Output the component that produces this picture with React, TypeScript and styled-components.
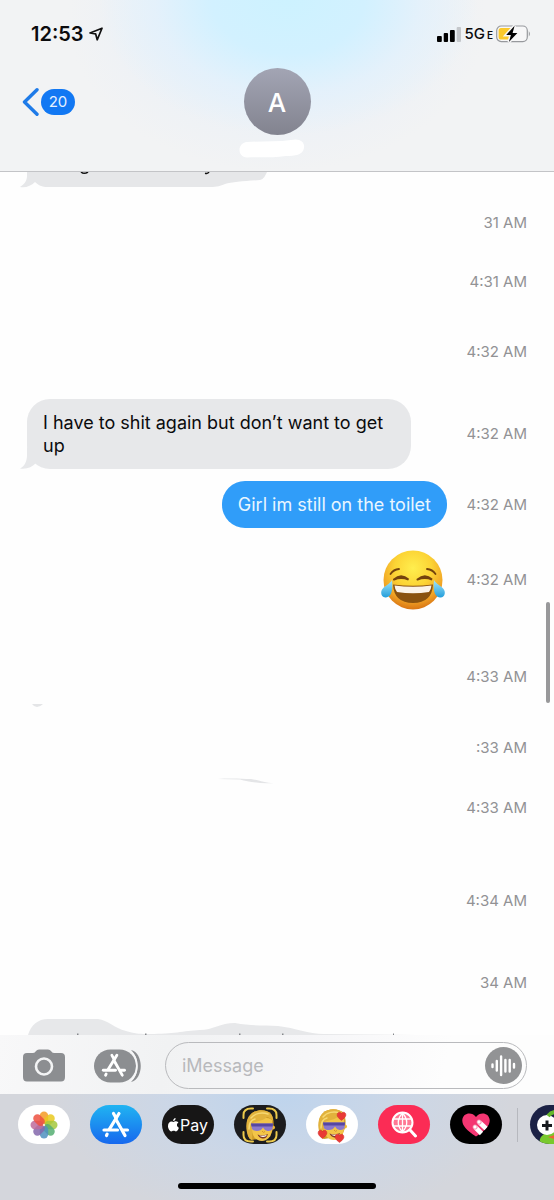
import React from "react";
import styled, { createGlobalStyle } from "styled-components";

const GlobalStyle = createGlobalStyle`
  * { box-sizing: border-box; }
  html, body { margin: 0; padding: 0; }
  body {
    background: #fefefe;
    font-family: Inter, "Liberation Sans", sans-serif;
    color: #0b0b0d;
    overflow-x: hidden;
  }
  button { border: 0; padding: 0; background: none; font: inherit; cursor: pointer; }
  svg { display: block; flex: none; }
`;

const Screen = styled.div`
  min-height: 100vh;
  display: flex;
  flex-direction: column;
  background: #fefefe;
`;

const Header = styled.header`
  border-bottom: 1px solid #c3c4c7;
  padding-bottom: 13px;
  background:
    radial-gradient(ellipse 190px 135px at 52% 0, #cdf2ff 0%, #d2f1ff 40%, rgba(226, 241, 252, 0.8) 70%, rgba(240, 241, 245, 0) 100%),
    radial-gradient(ellipse 210px 155px at 50% 10%, #e4eefa 0%, rgba(242, 243, 245, 0) 100%),
    #f2f3f4;
`;

const StatusBar = styled.div`
  display: flex;
  align-items: center;
  justify-content: space-between;
  height: 68px;
  padding: 0 23px 0 31px;
`;

const StatusGroup = styled.div<{ $gap: number }>`
  display: flex;
  align-items: center;
  gap: ${(p) => p.$gap}px;
`;

const Clock = styled.time`
  font-size: 20px;
  font-weight: 600;
  line-height: 24px;
  font-optical-sizing: none;
`;

const Carrier = styled.span`
  font-size: 15px;
  font-weight: 500;
  line-height: 18px;
  small { font-size: 10px; font-weight: 600; margin-left: 2px; }
`;

const NavRow = styled.div`
  display: grid;
  grid-template-columns: 1fr auto 1fr;
  align-items: start;
  padding: 0 22px;
`;

const BackButton = styled.button`
  display: flex;
  align-items: center;
  gap: 2px;
  height: 68px;
  justify-self: start;
`;

const UnreadCount = styled.span`
  width: 34px;
  border-radius: 13px;
  background: #1278f3;
  color: #e6f1ff;
  font-size: 15px;
  line-height: 26px;
  text-align: center;
`;

const Contact = styled.div`
  display: flex;
  flex-direction: column;
  align-items: center;
  gap: 4px;
`;

const Avatar = styled.div`
  width: 67px;
  height: 67px;
  border-radius: 50%;
  background: linear-gradient(#a3a5b4, #82838f);
  color: #fff;
  font-size: 26px;
  font-weight: 500;
  line-height: 69px;
  text-align: center;
`;

const Thread = styled.main`
  position: relative;
  flex: 1;
  display: flex;
  flex-direction: column;
`;

const ScrollThumb = styled.div`
  position: absolute;
  top: 430px;
  right: 4px;
  width: 4px;
  height: 101px;
  border-radius: 2px;
  background: #98989a;
`;

const MessageRow = styled.div<{ $height: number; $gap?: number; $sent?: boolean }>`
  display: grid;
  grid-template-columns: 1fr 80px;
  align-items: center;
  justify-items: ${(p) => (p.$sent ? "end" : "start")};
  min-height: ${(p) => p.$height}px;
  margin-top: ${(p) => p.$gap ?? 0}px;
  padding: 0 27px;
`;

const Stamp = styled.time`
  grid-column: 2;
  justify-self: end;
  color: #929295;
  font-size: 15px;
  line-height: 18px;
  white-space: nowrap;
`;

const Bubble = styled.p<{ $sent?: boolean }>`
  position: relative;
  margin: 0;
  max-width: 384px;
  padding: ${(p) => (p.$sent ? "12px 16px" : "12px 20px 12px 16px")};
  border-radius: 23px;
  background: ${(p) => (p.$sent ? "#309df9" : "#e7e8ea")};
  color: ${(p) => (p.$sent ? "#e9f6ff" : "#0b0b0d")};
  font-size: 18px;
  line-height: 23px;
  font-optical-sizing: none;
`;

const Tail = styled.svg`
  position: absolute;
  left: -7px;
  bottom: 0;
`;

const Residue = styled.div<{ $indent: number }>`
  padding-left: ${(p) => p.$indent}px;
  overflow: hidden;
`;

const Spacer = styled.div`
  flex: 1;
  min-height: 11px;
`;

const Composer = styled.form`
  display: flex;
  align-items: center;
  gap: 24px;
  padding: 7px 27px 5px 23px;
  background: linear-gradient(100deg, #f8f8f9, #f1f2f3 30%, #f6f6f8 55%, #fdfdfd 80%);
`;

const Tools = styled.div`
  display: flex;
  align-items: center;
  gap: 29px;
`;

const Field = styled.div`
  flex: 1;
  min-width: 0;
  display: flex;
  align-items: center;
  height: 47px;
  padding: 0 4px 0 16px;
  border: 1px solid #b9babd;
  border-radius: 24px;
`;

const TextInput = styled.input`
  flex: 1;
  min-width: 0;
  border: 0;
  padding: 0;
  outline: 0;
  background: none;
  font-family: inherit;
  font-size: 18px;
  line-height: 24px;
  &::placeholder { color: #b8b9bc; opacity: 1; }
`;

const Dock = styled.nav`
  height: 106px;
  display: flex;
  flex-direction: column;
  justify-content: space-between;
  align-items: center;
  padding: 11px 0 11px;
  background:
    radial-gradient(ellipse 230px 130px at 51% 0, #bed4ed 0%, rgba(200, 215, 235, 0.7) 50%, rgba(213, 214, 220, 0) 100%),
    #d4d6dc;
`;

const AppStrip = styled.div`
  display: flex;
  align-items: center;
  align-self: stretch;
  gap: 20px;
  padding-left: 18px;
  overflow: hidden;
`;

const AppButton = styled.button<{ $bg: string }>`
  flex: none;
  display: flex;
  align-items: center;
  justify-content: center;
  width: 52px;
  height: 39px;
  border-radius: 20px;
  background: ${(p) => p.$bg};
  overflow: hidden;
`;

const LastApps = styled.div`
  flex: none;
  display: flex;
  align-items: center;
  gap: 12px;
  margin-left: -5px;
`;

const Divider = styled.span`
  width: 1px;
  height: 34px;
  background: #b6b8be;
`;

const PayLabel = styled.span`
  display: flex;
  align-items: center;
  gap: 1px;
  color: #fff;
  font-size: 16px;
  line-height: 20px;
`;

const HomeBar = styled.div`
  width: 198px;
  height: 6px;
  border-radius: 3px;
  background: #000;
`;

const LocationIcon = () => (
  <svg width="14" height="14" viewBox="0 0 14 14" fill="none" stroke="#111" strokeWidth="1.7" strokeLinejoin="round">
    <path d="M13 1.2 L1 6 L6.6 6.8 L8.2 12.8 Z" />
  </svg>
);

const SignalIcon = () => (
  <svg width="24" height="16" viewBox="0 0 25 16" preserveAspectRatio="none">
    <rect x="0" y="10" width="5" height="6" rx="1" />
    <rect x="7" y="7" width="4.500" height="9" rx="1" />
    <rect x="13.500" y="4" width="5" height="12" rx="1" />
    <rect x="20.500" y="1" width="4.500" height="15" rx="1" fill="#c4c7cb" />
  </svg>
);

const BatteryIcon = () => (
  <svg width="35" height="18" viewBox="0 0 35 18">
    <rect x="0.7" y="1" width="30.6" height="15.6" rx="4.5" fill="#f7f7f8" stroke="#97999d" strokeWidth="1.2" />
    <path d="M5 3 H15 V14.6 H5 Q2.6 14.6 2.6 12 V5.6 Q2.6 3 5 3Z" fill="#fbc92b" />
    <path d="M32.8 6 Q35 8.8 32.8 11.6Z" fill="#97999d" />
    <path d="M18.6 0.8 L10.2 9.9 H14.9 L12.9 17 L21.4 7.9 H16.6 Z" fill="#000" stroke="#f7f7f8" strokeWidth="3" paintOrder="stroke" />
  </svg>
);

const BackIcon = () => (
  <svg width="17" height="28" viewBox="0 0 17 28" fill="none" stroke="#1f7be8" strokeWidth="3.4" strokeLinecap="round" strokeLinejoin="round">
    <path d="M15 1.8 L2.5 14 L15 26.2" />
  </svg>
);

const NameSmudge = () => (
  <svg width="76" height="19" viewBox="0 0 76 19" fill="#fff">
    <path d="M8 3 C22 2 38 3 52 1 C61 -1 66 3 65 9 C64 16 56 17 47 17 C34 19 20 18 8 18.5 C-2 18 -2 4 8 3Z" />
  </svg>
);

const TopResidue = () => (
  <svg width="248" height="22" viewBox="0 0 248 22">
    <path d="M7 0 H247 C245 4 244 7 240 8 C225 9 212 10 205 12 C200 14 198 15 190 15 H28 C22 15 18 13 15 10 C11 14 6 16 0 15 C5 12 7 8 7 4Z" fill="#e6e7e9" />
    <path d="M61 0 Q64 2.6 68 0" fill="none" stroke="#111" strokeWidth="1.5" />
    <path d="M185 1.2 Q188 2 189 0" fill="none" stroke="#111" strokeWidth="1.4" />
  </svg>
);

const BottomResidue = () => (
  <svg width="390" height="16" viewBox="0 0 390 16">
    <path d="M0 16 C3 6 10 0 20 0 H70 C80 1 86 9 98 12 C108 15 113 15 122 15 C145 15 155 12 172 11 C185 11 192 4 207 4 C223 7 235 6 250 7 C268 9 280 15 296 15 L390 16Z" fill="#e7e8ea" />
    <g fill="#85878b">
      <rect x="49" y="14.500" width="1.500" height="1.500" />
      <rect x="117" y="14.500" width="1.500" height="1.500" />
      <rect x="211" y="14.500" width="1.500" height="1.500" />
      <rect x="254" y="14.500" width="1.500" height="1.500" />
      <rect x="365" y="14.500" width="1" height="1.500" />
    </g>
  </svg>
);

const JoyEmoji = () => (
  <svg width="66" height="62" viewBox="0 0 66 62" role="img" aria-label="Face with tears of joy">
    <defs>
      <radialGradient id="joy" cx="0.5" cy="0.3" r="0.7">
        <stop offset="0" stopColor="#ffee4e" />
        <stop offset="0.45" stopColor="#fcd435" />
        <stop offset="0.78" stopColor="#f1a526" />
        <stop offset="1" stopColor="#d97414" />
      </radialGradient>
      <linearGradient id="tear" x1="0" y1="0" x2="0" y2="1">
        <stop offset="0" stopColor="#a5e7fb" />
        <stop offset="1" stopColor="#239edb" />
      </linearGradient>
    </defs>
    <circle cx="32" cy="31" r="29.5" fill="url(#joy)" />
    <g fill="none" stroke="#74430d" strokeLinecap="round">
      <path d="M9.500 25 Q12.500 20.500 18 20" strokeWidth="1.8" />
      <path d="M54.500 25 Q51.500 20.500 46 20" strokeWidth="1.8" />
      <path d="M13 30.500 Q20 24 27.500 30.500 Q20 27.500 13 30.500" strokeWidth="2" />
      <path d="M36.500 30.500 Q44 24 51 30.500 Q44 27.500 36.500 30.500" strokeWidth="2" />
    </g>
    <path d="M12 35.500 Q32 38 52 35.500 Q51 54 32 54 Q13 54 12 35.500Z" fill="#8a520f" />
    <path d="M13.500 36.500 Q32 39 50.500 36.500 Q50 41 48 43 Q32 45.500 16 43 Q14 41 13.500 36.500Z" fill="#fbf3e9" />
    <path d="M11 31 C12 40 11 48 5 48.500 C0 49 -1 43 1.500 40 C4 36.500 9 35 11 31Z" fill="url(#tear)" />
    <path d="M53 31 C52 40 53 48 59 48.500 C64 49 65 43 62.500 40 C60 36.500 55 35 53 31Z" fill="url(#tear)" />
  </svg>
);

const CameraIcon = () => (
  <svg width="42" height="33" viewBox="0 0 42 33">
    <path d="M4 4 H10 Q12 4 13 2 Q14 0.500 16 0.500 H25 Q27 0.500 28 2 Q29 4 31 4 H38 Q42 4 42 8 V28 Q42 32.500 38 32.500 H4 Q0 32.500 0 28 V8 Q0 4 4 4Z" fill="#8c8e91" />
    <circle cx="21" cy="17.500" r="8" fill="none" stroke="#f3f4f5" strokeWidth="2.600" />
  </svg>
);

const StoreGlyph = () => (
  <g fill="none" stroke="#fff" strokeWidth="3.200" strokeLinecap="round">
    <path d="M11 1.500 L13.500 6" />
    <path d="M16.500 1.500 L6.800 17.300" />
    <path d="M13.800 8 L22.500 23.500" />
    <path d="M1.500 18 H15" />
    <path d="M20.500 18 H25" />
    <path d="M4.600 22.200 L4 23.500" />
  </g>
);

const AppsIcon = () => (
  <svg width="47" height="34" viewBox="0 0 47 34">
    <path d="M37 1 C50 4 50 30 37 33 C46 24 46 10 37 1Z" fill="#8c8e91" />
    <rect x="0" y="0.500" width="42" height="33" rx="16.500" fill="#8c8e91" />
    <path d="M36 2 C45 8 45 26 36 32" fill="none" stroke="#f7f7f8" strokeWidth="1.500" />
    <g transform="translate(8 5) scale(0.9)"><StoreGlyph /></g>
  </svg>
);

const VoiceIcon = () => (
  <svg width="37" height="37" viewBox="0 0 37 37">
    <circle cx="18.500" cy="18.500" r="18.500" fill="#929395" />
    <path d="M7.500 17.500 V20 M11.800 14 V23.500 M16.100 9.500 V28 M20.400 13 V24.500 M24.700 13 V24.500 M29 17 V20.500" stroke="#fff" strokeWidth="2.400" strokeLinecap="round" />
  </svg>
);

const PETALS = ["#f59b24", "#e9c91e", "#a5c83d", "#55ae72", "#4f91bf", "#8467ac", "#bd6b9b", "#ed5141"];

const PhotosIcon = () => (
  <svg width="30" height="30" viewBox="0 0 30 30">
    {PETALS.map((color, i) => (
      <rect key={color} x="10.800" y="1.500" width="8.400" height="13" rx="4.200" fill={color} fillOpacity="0.85" transform={`rotate(${i * 45} 15 15)`} />
    ))}
    <circle cx="15" cy="15" r="1.200" fill="#f6e6d0" />
  </svg>
);

const AppStoreIcon = () => (
  <svg width="28" height="27" viewBox="-0.500 -1 28 27"><StoreGlyph /></svg>
);

const AppleIcon = () => (
  <svg width="11" height="14" viewBox="0 0 11 14" fill="#fff">
    <path d="M7.600 0 C7.700 1.800 6.500 3 5.100 3 C5 1.500 6.200 0.200 7.600 0Z M5.500 4 C6.200 4 6.800 3.200 8.100 3.300 C9.200 3.400 10 3.900 10.400 4.600 C8.300 6 8.500 8.800 10.900 9.700 C10.400 11.300 9.200 13.300 8 13.400 C7 13.400 6.800 12.800 5.700 12.800 C4.600 12.800 4.200 13.400 3.300 13.400 C1.700 13.300 0 10.400 0 7.900 C0 5 1.700 3.400 3.500 3.400 C4.400 3.400 5.100 4 5.500 4Z" />
  </svg>
);

const MemojiFace = () => (
  <g>
    <path d="M3 26 C1 18 1 10 6 5 C11 0 22 0 26 5 C29 9 29 15 28 20 L25 28 L7 31 Q4 30 3 26Z" fill="#cf9c28" />
    <path d="M7 13 C10 9 22 7 27 11 L27 21 C26 28 22 32 17 32 C11 32 7 27 7 21Z" fill="#f3c548" />
    <circle cx="28" cy="18.500" r="2" fill="#f1ba36" />
    <path d="M3 27 C0 18 1 9 6 5 C11 0 22 0 26 5 C27.500 7 28 9 28 12 C25 9 24 8 22 8 C18 12 12 12 8 14 C6 19 8 25 7 31 Q4 30 3 27Z" fill="#e2b23c" />
    <path d="M6 9 C10 4 17 3 23 5 M4 20 C4 14 6 11 10 10" fill="none" stroke="#f6d873" strokeWidth="1.500" strokeLinecap="round" />
    <path d="M6 14.500 H28 L27.500 20 Q26 22.500 22.500 22 Q19.500 21.500 18 18.500 Q16 22 12 22 Q8 22 7 20Z" fill="#8b78cc" />
    <path d="M6 14.500 H28 L27.700 17.500 H6.500Z" fill="#5646a2" />
    <path d="M17 22 Q18.500 24.500 20 22.500" fill="none" stroke="#d6952b" strokeWidth="1" />
    <path d="M12.500 25.500 Q18 27.500 23 25 Q21.500 30 17.500 29.500 Q14 29 12.500 25.500Z" fill="#7d3725" />
    <path d="M14 26.200 Q18 27.600 22 25.800 Q21 28 18 28 Q15.500 28 14 26.200Z" fill="#fff" />
  </g>
);

const MemojiScanIcon = () => (
  <svg width="36" height="36" viewBox="0 0 36 36">
    <g transform="translate(3 2)"><MemojiFace /></g>
    <path d="M1.500 11 V8 Q1.500 1.500 9 1.500 H11 M25 1.500 H27 Q34.500 1.500 34.500 8 V11 M34.500 25 V28 Q34.500 34.500 27 34.500 H25 M11 34.500 H9 Q1.500 34.500 1.500 28 V25" fill="none" stroke="#ecc94c" strokeWidth="2" strokeLinecap="round" />
  </svg>
);

const Heart = ({ x, y }: { x: number; y: number }) => (
  <path transform={`translate(${x} ${y})`} d="M4.500 8.500 C1 6 -0.500 4 0.300 1.800 C1.200 -0.300 3.600 -0.200 4.500 1.600 C5.400 -0.200 7.900 -0.300 8.700 1.800 C9.500 4 8 6 4.500 8.500Z" fill="#e93a35" stroke="#c92226" strokeWidth="0.400" />
);

const MemojiHeartsIcon = () => (
  <svg width="34" height="36" viewBox="0 0 34 36">
    <g transform="translate(2 1)"><MemojiFace /></g>
    <Heart x={22} y={5} />
    <Heart x={3} y={23} />
    <Heart x={20} y={27} />
  </svg>
);

const ImageSearchIcon = () => (
  <svg width="27" height="27" viewBox="0 0 27 27" fill="none" stroke="#fff">
    <circle cx="11.500" cy="11.500" r="10" fill="#ff7894" strokeWidth="2" />
    <path d="M11.500 2 V21 M2 8 H21 M2 15 H21 M11.500 2 Q3 11.500 11.500 21 M11.500 2 Q20 11.500 11.500 21" strokeWidth="1.300" />
    <path d="M19 19 L24.500 25" strokeWidth="3" strokeLinecap="round" />
  </svg>
);

const TouchHeartIcon = () => (
  <svg width="28" height="24" viewBox="0 0 28 24">
    <path d="M14 23.500 C4 17 0 12 0.300 7 C1 -0.500 10 -1.500 14 4 C18 -1.500 27 -0.500 27.700 7 C28 12 24 17 14 23.500Z" fill="#f43672" />
    <g stroke="#fff" strokeWidth="4.600">
      <path d="M17 9 L24 15.500" />
      <path d="M13 14 L19.500 20.500" />
    </g>
    <g fill="#fff" stroke="#f06c96" strokeWidth="0.800">
      <circle cx="17" cy="9" r="2.200" />
      <circle cx="13" cy="14" r="2.200" />
    </g>
  </svg>
);

const GameIcon = () => (
  <svg width="52" height="39" viewBox="0 0 52 39">
    <path d="M10 39 C8 31 15 27 24 27 L34 20 L52 18 V39Z" fill="#79c92e" />
    <path d="M18 32 L28 29 L27 35Z" fill="#ed6433" />
    <circle cx="17" cy="20" r="10" fill="#fff" />
    <circle cx="36" cy="18" r="11" fill="#fff" />
    <path d="M17 15.500 V25.500 M12 20.500 H22" stroke="#17191e" strokeWidth="3" />
    <path d="M18 11 Q23 5 31 8" fill="none" stroke="#67b82c" strokeWidth="4" />
  </svg>
);

export default function App() {
  return (
    <Screen>
      <GlobalStyle />
      <Header>
        <StatusBar>
          <StatusGroup $gap={5}>
            <Clock>12:53</Clock>
            <LocationIcon />
          </StatusGroup>
          <StatusGroup $gap={3}>
            <SignalIcon />
            <Carrier>5G<small>E</small></Carrier>
            <BatteryIcon />
          </StatusGroup>
        </StatusBar>
        <NavRow>
          <BackButton type="button" aria-label="Back, 20 unread">
            <BackIcon />
            <UnreadCount>20</UnreadCount>
          </BackButton>
          <Contact>
            <Avatar>A</Avatar>
            <NameSmudge />
          </Contact>
        </NavRow>
      </Header>

      <Thread>
        <Residue $indent={20}><TopResidue /></Residue>
        <MessageRow $height={58}><Stamp>31 AM</Stamp></MessageRow>
        <MessageRow $height={60}><Stamp>4:31 AM</Stamp></MessageRow>
        <MessageRow $height={80}><Stamp>4:32 AM</Stamp></MessageRow>
        <MessageRow $height={70} $gap={7}>
          <Bubble>
            I have to shit again but don’t want to get up
            <Tail width="24" height="22" viewBox="0 0 24 22" aria-hidden="true">
              <path d="M7 0 V8 C7 14 5 19 0 21.500 C7 22.500 12 20 15.500 16.500 L20 10Z" fill="#e7e8ea" />
            </Tail>
          </Bubble>
          <Stamp>4:32 AM</Stamp>
        </MessageRow>
        <MessageRow $height={47} $gap={12} $sent>
          <Bubble $sent>Girl im still on the toilet</Bubble>
          <Stamp>4:32 AM</Stamp>
        </MessageRow>
        <MessageRow $height={62} $gap={21} $sent>
          <JoyEmoji />
          <Stamp>4:32 AM</Stamp>
        </MessageRow>
        <MessageRow $height={94} $gap={19}>
          <svg width="18" height="60" viewBox="0 0 18 60"><path d="M5 57 H16 Q13 60 10 60 Q7 60 5 57Z" fill="#e4e5e7" /></svg>
          <Stamp>4:33 AM</Stamp>
        </MessageRow>
        <MessageRow $height={48}><Stamp>:33 AM</Stamp></MessageRow>
        <MessageRow $height={72}>
          <svg width="250" height="60" viewBox="0 0 250 60"><path d="M191 1 C204 0 216 1 224 1 C232 2 238 5 247 5 C234 6 222 4 213 1.500Z" fill="#e4e5e7" /></svg>
          <Stamp>4:33 AM</Stamp>
        </MessageRow>
        <MessageRow $height={114}><Stamp>4:34 AM</Stamp></MessageRow>
        <MessageRow $height={50}><Stamp>34 AM</Stamp></MessageRow>
        <Spacer />
        <Residue $indent={28}><BottomResidue /></Residue>
        <ScrollThumb />
      </Thread>

      <Composer onSubmit={(e) => e.preventDefault()}>
        <Tools>
          <button type="button" aria-label="Camera"><CameraIcon /></button>
          <button type="button" aria-label="Apps"><AppsIcon /></button>
        </Tools>
        <Field>
          <TextInput type="text" aria-label="Message" placeholder="iMessage" />
          <button type="button" aria-label="Record audio"><VoiceIcon /></button>
        </Field>
      </Composer>

      <Dock aria-label="Message apps">
        <AppStrip>
          <AppButton $bg="#fff" aria-label="Photos"><PhotosIcon /></AppButton>
          <AppButton $bg="linear-gradient(#20b4f2, #1768ee)" aria-label="App Store"><AppStoreIcon /></AppButton>
          <AppButton $bg="#171616" aria-label="Apple Pay"><PayLabel><AppleIcon />Pay</PayLabel></AppButton>
          <AppButton $bg="#1c1c1e" aria-label="Memoji"><MemojiScanIcon /></AppButton>
          <AppButton $bg="#fff" aria-label="Memoji stickers"><MemojiHeartsIcon /></AppButton>
          <AppButton $bg="#fb2c55" aria-label="Image search"><ImageSearchIcon /></AppButton>
          <AppButton $bg="#000" aria-label="Digital Touch"><TouchHeartIcon /></AppButton>
          <LastApps>
            <Divider />
            <AppButton $bg="#1b2145" aria-label="Games"><GameIcon /></AppButton>
          </LastApps>
        </AppStrip>
        <HomeBar />
      </Dock>
    </Screen>
  );
}
